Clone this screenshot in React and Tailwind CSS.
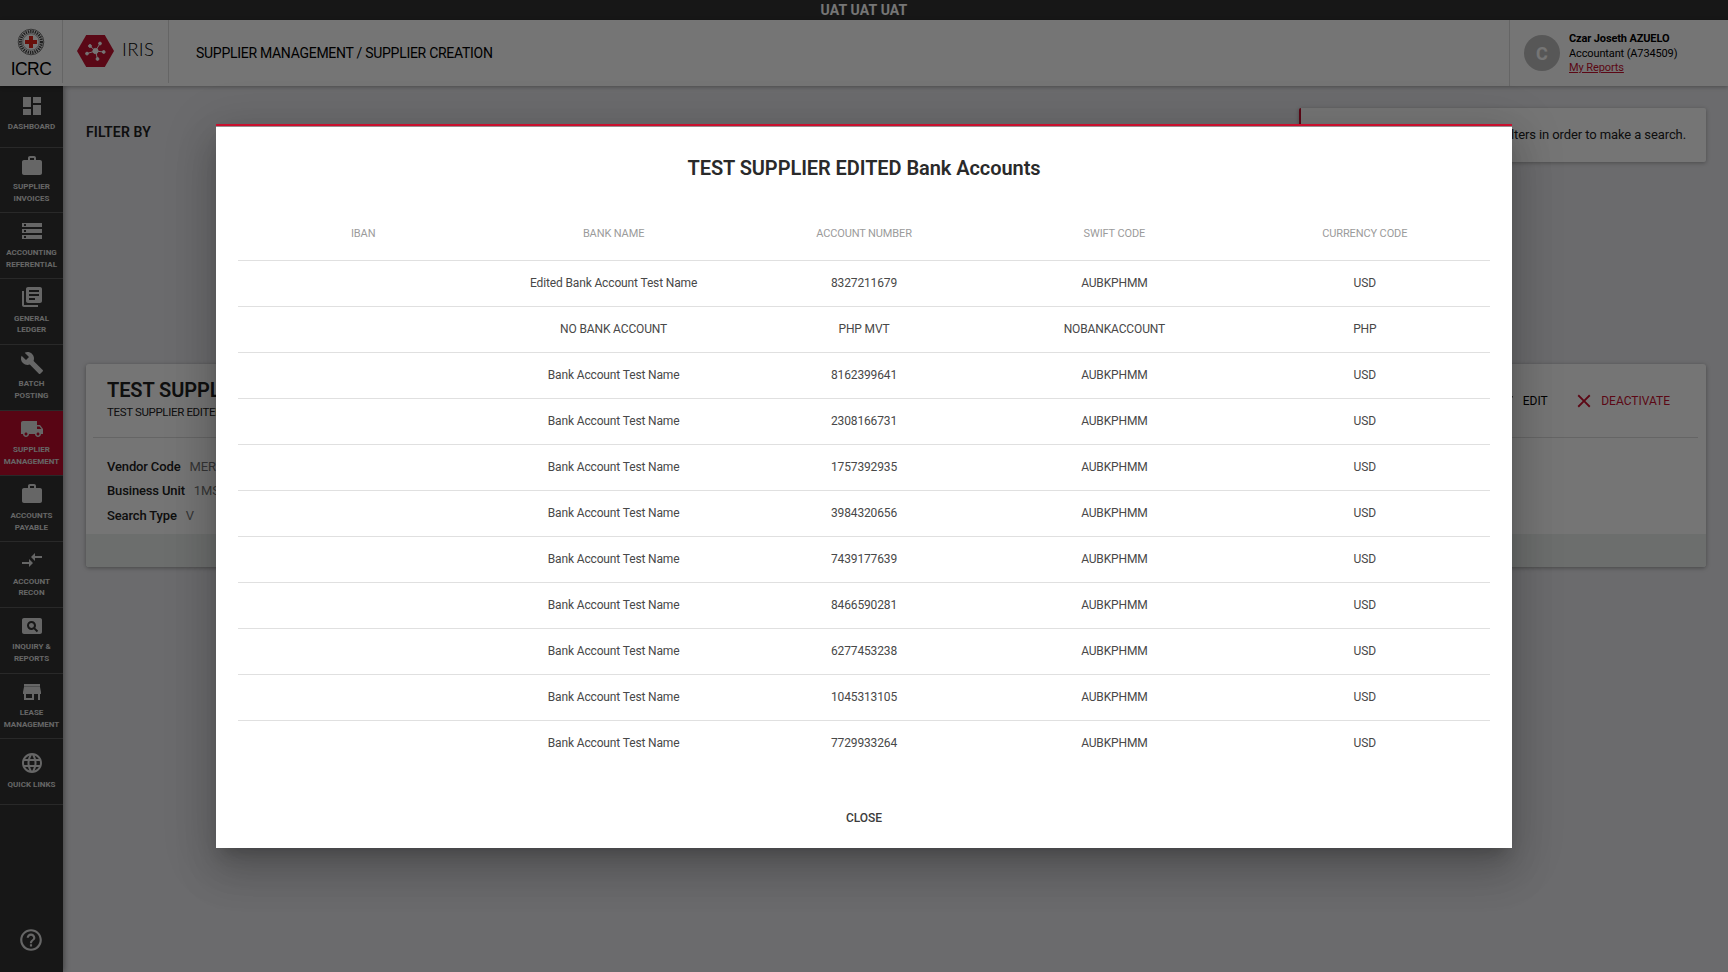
import React from "react";
import {
  MdDashboard,
  MdStorage,
  MdLibraryBooks,
  MdBuild,
  MdLocalShipping,
  MdCompareArrows,
  MdPageview,
  MdLanguage,
  MdHelpOutline,
  MdClose,
  MdEdit,
} from "react-icons/md";

function StoreIcon({ className }) {
  return (
    <svg viewBox="0 0 24 24" fill="currentColor" className={className}>
      <path d="M20 4H4v2h16V4zm1 10v-2l-1-5H4l-1 5v2h1v6h10v-6h4v6h2v-6h1zm-9 4H6v-4h6v4z" />
      <path d="M4 5.500h16v2H4z" opacity="0.7" />
    </svg>
  );
}

function BriefcaseIcon({ className }) {
  return (
    <svg viewBox="0 0 24 24" fill="currentColor" className={className}>
      <path d="M20 6h-4V4c0-1.110-.89-2-2-2h-4c-1.110 0-2 .89-2 2v2H4c-1.110 0-1.990.89-1.990 2L2 19c0 1.110.89 2 2 2h16c1.110 0 2-.89 2-2V8c0-1.110-.89-2-2-2zm-6 0h-4V4h4v2z" />
    </svg>
  );
}

const NAV = [
  { icon: MdDashboard, lines: ["DASHBOARD"] },
  { icon: BriefcaseIcon, lines: ["SUPPLIER", "INVOICES"] },
  { icon: MdStorage, lines: ["ACCOUNTING", "REFERENTIAL"] },
  { icon: MdLibraryBooks, lines: ["GENERAL", "LEDGER"] },
  { icon: MdBuild, lines: ["BATCH", "POSTING"] },
  { icon: MdLocalShipping, lines: ["SUPPLIER", "MANAGEMENT"], active: true },
  { icon: BriefcaseIcon, lines: ["ACCOUNTS", "PAYABLE"] },
  { icon: MdCompareArrows, lines: ["ACCOUNT", "RECON"] },
  { icon: MdPageview, lines: ["INQUIRY &", "REPORTS"] },
  { icon: StoreIcon, lines: ["LEASE", "MANAGEMENT"] },
  { icon: MdLanguage, lines: ["QUICK LINKS"] },
];

const COLUMNS = ["IBAN", "BANK NAME", "ACCOUNT NUMBER", "SWIFT CODE", "CURRENCY CODE"];

const ROWS = [
  ["", "Edited Bank Account Test Name", "8327211679", "AUBKPHMM", "USD"],
  ["", "NO BANK ACCOUNT", "PHP MVT", "NOBANKACCOUNT", "PHP"],
  ["", "Bank Account Test Name", "8162399641", "AUBKPHMM", "USD"],
  ["", "Bank Account Test Name", "2308166731", "AUBKPHMM", "USD"],
  ["", "Bank Account Test Name", "1757392935", "AUBKPHMM", "USD"],
  ["", "Bank Account Test Name", "3984320656", "AUBKPHMM", "USD"],
  ["", "Bank Account Test Name", "7439177639", "AUBKPHMM", "USD"],
  ["", "Bank Account Test Name", "8466590281", "AUBKPHMM", "USD"],
  ["", "Bank Account Test Name", "6277453238", "AUBKPHMM", "USD"],
  ["", "Bank Account Test Name", "1045313105", "AUBKPHMM", "USD"],
  ["", "Bank Account Test Name", "7729933264", "AUBKPHMM", "USD"],
];

function IcrcEmblem() {
  return (
    <svg viewBox="0 0 28 28" className="size-7">
      <circle cx="14" cy="14" r="12.800" fill="#fff" stroke="#555" strokeWidth="0.8" />
      <circle cx="14" cy="14" r="10.500" fill="none" stroke="#444" strokeWidth="3" strokeDasharray="1.400 0.9" />
      <circle cx="14" cy="14" r="8.300" fill="#fff" stroke="#666" strokeWidth="0.6" />
      <path d="M12 8h4v4h4v4h-4v4h-4v-4H8v-4h4z" fill="#e2231a" />
    </svg>
  );
}

function IrisMark() {
  return (
    <svg viewBox="0 0 37 32" className="h-8 w-[37px]">
      <path d="M9.200 0h18.600L37 16l-9.200 16H9.200L0 16z" fill="#c41230" />
      <g stroke="#fff" strokeWidth="1" fill="#fff">
        <path d="M18.500 16L13 11M18.500 16l4.500-7.500M18.500 16l8 1M18.500 16l2 8M18.500 16l-8.500 2.500" />
        <circle cx="18.500" cy="16" r="2.600" />
        <circle cx="13" cy="11" r="1.400" />
        <circle cx="23" cy="8.500" r="1.400" />
        <circle cx="26.700" cy="17" r="1.400" />
        <circle cx="20.500" cy="24" r="1.400" />
        <circle cx="10" cy="18.600" r="1.400" />
      </g>
    </svg>
  );
}

function Header() {
  return (
    <header className="relative z-20 flex h-[66px] shrink-0 bg-white text-black shadow-[0_1px_4px_rgba(0,0,0,0.3)]">
      <div className="flex h-[63px] w-[63px] shrink-0 flex-col items-center border-r border-[#dcdcdc] pt-[8px]">
        <IcrcEmblem />
        <span className="mt-[2px] font-['Liberation_Sans',sans-serif] text-[17.500px] leading-[22px] tracking-[-0.6px]">ICRC</span>
      </div>
      <div className="flex h-[63px] w-[106px] shrink-0 items-start border-r border-[#dcdcdc] pt-[15px] pl-[14px]">
        <IrisMark />
        <span className="ml-2 font-[Lato,sans-serif] text-[18.500px] leading-[29px] font-light tracking-[0.4px]">IRIS</span>
      </div>
      <div className="flex flex-1 items-center pl-[27px] text-[14px] tracking-[-0.28px]">
        SUPPLIER MANAGEMENT / SUPPLIER CREATION
      </div>
      <div className="flex w-[219px] shrink-0 items-center border-l border-[#dcdcdc] pl-[14px]">
        <div className="flex size-9 items-center justify-center rounded-full bg-[#bdbdbd] text-[18px] font-bold text-white">C</div>
        <div className="ml-[9px] flex flex-col pt-[2px] text-[11px] leading-[14.400px]">
          <span className="font-bold tracking-[-0.13px]">Czar Joseth AZUELO</span>
          <span className="tracking-[-0.13px]">Accountant (A734509)</span>
          <a className="tracking-[-0.1px] text-[#c8102e] underline">My Reports</a>
        </div>
      </div>
    </header>
  );
}

function Sidebar() {
  return (
    <nav className="relative z-10 flex w-[63px] shrink-0 flex-col bg-[#323232] text-[#dedfdf] shadow-[1px_0_6px_rgba(0,0,0,0.4)]">
      <div className="-mt-[4px] flex flex-col">
        {NAV.map(({ icon: Icon, lines, active }, i) => (
          <div
            key={i}
            className={
              "flex h-[65.740px] flex-col items-center justify-center border-b border-[#5a5a5a] pb-[2px] " +
              (active ? "bg-[#c00d2d]" : "")
            }
          >
            <Icon className="size-6 shrink-0" />
            <div className="mt-[3.500px] flex flex-col text-center text-[8px] leading-[11.700px] font-bold tracking-[0.02px] whitespace-nowrap">
              {lines.map((l) => (
                <span key={l}>{l}</span>
              ))}
            </div>
          </div>
        ))}
      </div>
      <MdHelpOutline className="mt-auto mb-[19px] ml-[17.500px] size-[26px]" />
    </nav>
  );
}

function Field({ label, value }) {
  return (
    <div className="flex h-[24.500px] items-center gap-[9px] text-[13px] tracking-[-0.14px]">
      <span className="font-medium">{label}</span>
      <span className="text-[#757575]">{value}</span>
    </div>
  );
}

function Content() {
  return (
    <main className="flex flex-1 flex-col bg-[#e9e9ed] pt-[22px] pr-[22px] pl-[23px] text-[#212121]">
      <div className="flex items-start justify-between">
        <h2 className="pt-[13px] text-[14px] leading-[22px] font-semibold tracking-[0.15px]">FILTER BY</h2>
        <div className="flex h-[54px] w-[407px] items-center justify-end rounded-[2px] border-l-2 border-[#c8102e] bg-white pr-[20px] text-[13px] tracking-[-0.1px] shadow-[0_1px_4px_rgba(0,0,0,0.3)]">
          Please use the filters in order to make a search.
        </div>
      </div>
      <section className="mt-[202px] flex h-[203px] flex-col rounded-[3px] bg-white shadow-[0_1px_4px_rgba(0,0,0,0.35)]">
        <div className="mr-[8px] ml-[7px] flex h-[74px] shrink-0 justify-between border-b border-[#dcdcdc] pl-[14px]">
          <div className="flex flex-col pt-[14px]">
            <h3 className="text-[20px] leading-[24px] font-semibold tracking-[-0.1px]">TEST SUPPLIER EDITED</h3>
            <span className="mt-[2px] text-[11.500px] leading-[16px] tracking-[-0.35px]">TEST SUPPLIER EDITED</span>
          </div>
          <div className="flex h-[73px] items-center pr-[28px] text-[12px] text-black">
            <MdEdit className="mr-[8px] size-[18px]" />
            <span>EDIT</span>
            <MdClose className="mr-[6.500px] ml-[25px] size-[22px] text-[#c8102e]" />
            <span className="text-[#c8102e]">DEACTIVATE</span>
          </div>
        </div>
        <div className="flex flex-1 flex-col pt-[16px] pl-[21px]">
          <Field label="Vendor Code" value="MER" />
          <Field label="Business Unit" value="1MS" />
          <Field label="Search Type" value="V" />
        </div>
        <div className="h-[33px] shrink-0 rounded-b-[3px] bg-[#ebefed]" />
      </section>
    </main>
  );
}

function BankAccountsDialog() {
  return (
    <div
      role="dialog"
      className="flex h-[724px] w-[1296px] flex-col border-t-2 border-[#c8102e] bg-white shadow-[0_11px_15px_-7px_rgba(0,0,0,0.2),0_24px_38px_3px_rgba(0,0,0,0.14),0_9px_46px_8px_rgba(0,0,0,0.12)]"
    >
      <div className="flex flex-1 flex-col border-t border-[#9a9093] px-[22px]">
        <h1 className="mt-[29px] text-center text-[20px] leading-[24px] font-semibold tracking-[-0.07px] text-[#2a2a2a]">
          TEST SUPPLIER EDITED Bank Accounts
        </h1>
        <div className="mt-[26px] grid h-[55px] grid-cols-5 items-center border-b border-[#e0e0e0] pt-[2px] text-center text-[11px] tracking-[-0.12px] text-[#9b9b9b]">
          {COLUMNS.map((c) => (
            <span key={c}>{c}</span>
          ))}
        </div>
        {ROWS.map((row, i) => (
          <div
            key={i}
            className="grid h-[46px] shrink-0 grid-cols-5 items-center border-b border-[#e0e0e0] pb-[2px] text-center text-[12px] tracking-[-0.14px] text-[#484848] last-of-type:border-transparent"
          >
            {row.map((cell, j) => (
              <span key={j}>{cell}</span>
            ))}
          </div>
        ))}
        <button className="mt-[41px] text-[12px] leading-[20px] font-medium tracking-[-0.05px] text-[#3c3c3c]">CLOSE</button>
      </div>
    </div>
  );
}

export default function App() {
  return (
    <div className="relative flex h-[972px] w-[1728px] flex-col overflow-hidden font-[Roboto,sans-serif]">
      <div className="flex h-[20px] shrink-0 items-center justify-center bg-[#323232] text-[14px] font-bold tracking-[0.15px] text-white">
        UAT UAT UAT
      </div>
      <Header />
      <div className="flex min-h-0 flex-1">
        <Sidebar />
        <Content />
      </div>
      <div className="absolute inset-0 z-30 flex items-start justify-center bg-black/54 pt-[124px]">
        <BankAccountsDialog />
      </div>
    </div>
  );
}
